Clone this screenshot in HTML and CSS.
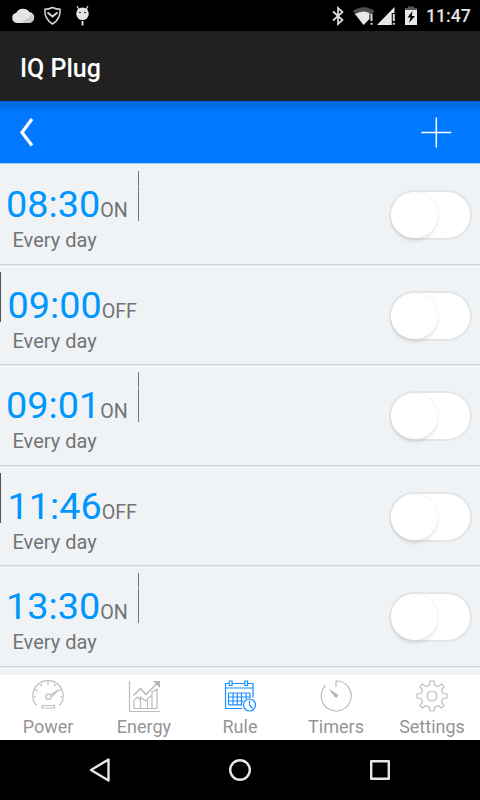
FILE: index.html
```html
<!DOCTYPE html>
<html lang="en">
<head>
<meta charset="utf-8">
<title>IQ Plug</title>
<link rel="stylesheet" href="styles.css">
</head>
<body>
<div class="screen">
  <div class="status">
    <svg class="status-left" width="100" height="31" viewBox="0 0 100 31">
      <path fill="#e4e4e4" d="M17 23a5.200 5.200 0 0 1-.5-10.300 7.500 7.500 0 0 1 12.500-.700 5.500 5.500 0 0 1-.5 11z"/>
      <path fill="#e4e4e4" d="M16.500 12.500a7.500 7.500 0 0 1 13.500 1v8H17z"/>
      <path fill="#c9c9c9" d="M31 14c-1 4-4 6-8 6.500V23h6a4.800 4.800 0 0 0 2-9z"/>
      <path fill="none" stroke="#d8d8d8" stroke-width="1.500" d="M52.500 7.500q4 1.800 7.600 1.800c.5 7-2.600 11.700-7.600 14.700-5-3-8.100-7.700-7.600-14.700q3.600 0 7.600-1.800z"/>
      <path fill="none" stroke="#d8d8d8" stroke-width="2" d="M47.500 12.500l5 4 5-4"/>
      <circle cx="82.500" cy="13.700" r="6.300" fill="#e4e4e4"/>
      <path stroke="#e4e4e4" stroke-width="1.200" d="M77 6l2 3.500M88 6l-2 3.500"/>
      <path stroke="#eee" stroke-width="1.800" d="M82.500 21v4.500"/>
      <circle cx="80" cy="12.500" r=".8"/><circle cx="85" cy="12.500" r=".8"/>
    </svg>
    <svg class="status-right" width="90" height="31" viewBox="330 0 90 31">
      <path fill="none" stroke="#dedede" stroke-width="1.700" d="M333 11.500l9.500 8.500-4.500 4V8l4.500 4-9.500 8.500"/>
      <path fill="#4d4d4d" d="M353 11q10.500-7.500 21.500 0l-3 4h-16z"/>
      <path fill="#e8e8e8" d="M355 14q8-4.500 14.500-1V19l-6 6z"/>
      <path fill="#e8e8e8" d="M377 25L394.500 7v6H392v12z"/>
      <path stroke="#000" stroke-width="3.500" d="M393.500 13v12"/>
      <path stroke="#ddd" stroke-width="2" d="M371.500 14v7m0 1.700v2M393.800 14v7m0 1.700v2"/>
      <path fill="#555" d="M408 6.500h6V8h3v2.500h-12V8h3z"/>
      <path fill="#e8e8e8" d="M405 10h12v15h-12z"/>
      <path d="M412.500 11l-5 6.500h3L409 23l6-7h-3.300z"/>
    </svg>
    <span class="clock">11:47</span>
  </div>
  <header class="titlebar"><h1>IQ Plug</h1></header>
  <div class="toolbar">
    <svg width="20" height="32" viewBox="0 0 20 32"><path fill="none" stroke="#fff" stroke-width="3.200" d="M14 3L4 16.500 14 29.500"/></svg>
    <svg width="32" height="32" viewBox="0 0 32 32"><path stroke="#fff" stroke-width="1.500" d="M16.300 1.500v30M1.300 16.500h30"/></svg>
  </div>
  <main class="rules">
    <div class="rule">
      <div class="info"><div class="line"><span class="time">08:30</span><span class="state">ON</span><i class="mark end"></i></div><div class="repeat">Every day</div></div>
      <div class="switch"><i class="knob"></i></div>
    </div>
    <div class="rule">
      <div class="info"><div class="line off"><i class="mark start"></i><span class="time">09:00</span><span class="state">OFF</span></div><div class="repeat">Every day</div></div>
      <div class="switch"><i class="knob"></i></div>
    </div>
    <div class="rule">
      <div class="info"><div class="line"><span class="time">09:01</span><span class="state">ON</span><i class="mark end"></i></div><div class="repeat">Every day</div></div>
      <div class="switch"><i class="knob"></i></div>
    </div>
    <div class="rule">
      <div class="info"><div class="line off"><i class="mark start"></i><span class="time">11:46</span><span class="state">OFF</span></div><div class="repeat">Every day</div></div>
      <div class="switch"><i class="knob"></i></div>
    </div>
    <div class="rule">
      <div class="info"><div class="line"><span class="time">13:30</span><span class="state">ON</span><i class="mark end"></i></div><div class="repeat">Every day</div></div>
      <div class="switch"><i class="knob"></i></div>
    </div>
  </main>
  <nav class="tabs">
    <div class="tab">
      <svg viewBox="0 0 32 32"><path d="M5 25l-1.500-.5A15.200 15.200 0 1 1 28.500 24.500L27 25M10 25.500h12.500v2.500H10zM16 1.500v3M8.500 4l1.300 2.400M23.500 4l-1.300 2.400M3 9.500l2.500 1.300M29 9.500l-2.500 1.300M1 17h3M31 17h-3M18.200 15L26 10.300l-6.500 6.500"/><circle cx="16.500" cy="16.800" r="2.600"/></svg>
      <span>Power</span>
    </div>
    <div class="tab">
      <svg viewBox="0 0 32 32"><path d="M1.500 1v30.500H32M6 28.500v-8l3.500-3.500 3 3v8.500zM12.500 28.500V17l5 4 2-2v9.500zM19.500 28.500V19l4.500-4v13.500zM24 28.500V12l5-3v19.500z"/><path stroke-width="1.700" d="M5.500 15.500l7-7 5.500 6L29 3.500"/><path class="solid" d="M25 1h7v7z"/></svg>
      <span>Energy</span>
    </div>
    <div class="tab active">
      <svg viewBox="0 0 32 32"><path d="M18 28.500H1.500V3.500H5M8.500 3.500h12M24 3.500h5v14M1.500 8h27.500M4.500 13h21.500M4.500 17h21M4.500 21h15M4.500 24.800H18M4.500 13v12M9 13v12M13.300 13v12M17.500 13v12M22 13v6M26 13v5M5.300 1h2.800v4.500H5.300zM20.800 1h2.800v4.500h-2.800z"/><circle cx="25.500" cy="25" r="6"/><path d="M25.500 20.500V25l3 3.500"/></svg>
      <span>Rule</span>
    </div>
    <div class="tab">
      <svg viewBox="0 0 32 32"><path d="M16 7V1A15 15 0 1 1 5.500 5.500"/><path class="solid" d="M8.500 8.500l9 5.800a2 2 0 0 1-2.800 2.800z"/></svg>
      <span>Timers</span>
    </div>
    <div class="tab">
      <svg viewBox="0 0 32 32"><path d="M13.500 5L14 1h4l.5 4 3.800 1.600 3.100-2.500 2.600 2.600-2.500 3.300 1.500 3.500 4 .5v4l-4 .5-1.500 3.700 2.500 3.200-2.600 2.600-3.200-2.400-3.700 1.500-.5 3.900h-4l-.5-3.900-3.800-1.500-3.100 2.400L4 25.400l2.500-3.200L5 18.500 1 18v-4l4-.5L6.500 10 4 6.700l2.600-2.600 3.200 2.500z"/><circle cx="16" cy="16" r="5"/></svg>
      <span>Settings</span>
    </div>
  </nav>
  <footer class="navbar">
    <svg width="24" height="28" viewBox="0 0 24 28"><path d="M20.500 3.500v21L3 14z"/></svg>
    <svg width="24" height="28" viewBox="0 0 24 28"><circle cx="12" cy="14" r="9.800"/></svg>
    <svg width="24" height="28" viewBox="0 0 24 28"><path d="M3.200 5.200h17.600v17.600H3.200z"/></svg>
  </footer>
</div>
</body>
</html>
```
FILE: styles.css
```css
* { box-sizing: border-box; }
body { margin: 0; background: #000; font-family: Roboto, "Liberation Sans", sans-serif; }
.screen { width: 480px; height: 800px; display: flex; flex-direction: column; overflow: hidden; }
.status { height: 31px; flex: none; display: flex; background: #000; color: #e4e4e4; }
.status-right { margin-left: auto; }
.clock { width: 60px; padding-left: 6px; font-size: 17.700px; line-height: 33px; font-weight: 500; }
.titlebar { height: 70px; flex: none; padding-left: 20px; background: #212121; color: #fff; }
.titlebar h1 { margin: 0; font-size: 25px; line-height: 75px; font-weight: 500; }
.toolbar {
  height: 62px; flex: none; display: flex; justify-content: space-between; align-items: center;
  padding: 0 28px 0 18px;
  background: linear-gradient(#0064d5, #0078ff 11px);
}
.rules { height: 512px; flex: none; overflow: hidden; background: #eff3f6; border-top: 1px solid #a9d0fb; }
.rule {
  height: 100.600px; display: flex; justify-content: space-between;
  border-bottom: 1px solid #d0d2d5; box-shadow: 0 1px #e6e8ea, 0 2px #f8fafb;
}
.info { padding-top: 7px; }
.line { display: flex; align-items: baseline; height: 57px; padding-left: 6px; line-height: 67px; position: relative; }
.line.off { padding-left: 7.500px; }
.time { font-size: 37.800px; color: #0096ff; }
.state { font-size: 19.700px; color: #737373; }
.mark { position: absolute; top: 0; width: 1px; height: 50px; background: linear-gradient(#777 15px, #bbb 15px, #bbb 16px, #777 16px); }
.mark.start { left: 0; background: #555; }
.mark.end { left: 138px; }
.repeat { padding-left: 12.500px; font-size: 20px; line-height: 24px; color: #737373; }
.switch {
  width: 83px; height: 50px; margin: 26px 8px 0 0; border: 2px solid #e4e5e6; border-radius: 25px; background: #fff;
}
.knob {
  display: block; width: 47px; height: 46px; border-radius: 50%; background: #fff;
  box-shadow: 0 0 2px #e0e0e0, 0 4px 3px rgba(0, 0, 0, .07);
}
.tabs { height: 65px; flex: none; display: grid; grid-template-columns: repeat(5, 1fr); background: #fff; }
.tab { display: flex; flex-direction: column; align-items: center; padding-top: 5px; color: #959595; font-size: 18px; line-height: 30px; }
.tab svg { width: 32px; height: 32px; fill: none; stroke: #bdbdbd; stroke-width: 1.200; }
.tab.active svg { stroke: #1890ff; }
.tab .solid { fill: #b5b5b5; stroke: none; }
.navbar { height: 60px; flex: none; display: flex; justify-content: space-between; align-items: center; padding: 0 88px; background: #000; }
.navbar svg { fill: none; stroke: #e6e6e6; stroke-width: 2.400; stroke-linejoin: round; }
```
